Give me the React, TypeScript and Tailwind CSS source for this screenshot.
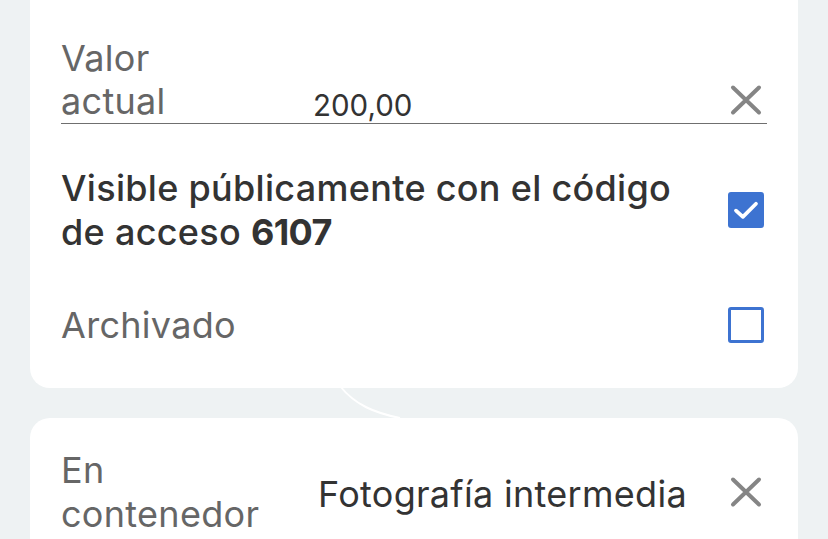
import React, { useState } from 'react';

const CloseIcon = () => (
    <svg viewBox="0 0 32 32" className="w-[32px] h-[32px]" fill="none" stroke="#858585" strokeWidth="4" strokeLinecap="round">
        <path d="M3 3.5 L29 28.5 M29 3.5 L3 28.5" />
    </svg>
);

const Checkbox: React.FC<{ checked: boolean; onChange: () => void }> = ({ checked, onChange }) => (
    <button
        onClick={onChange}
        className={`w-[36px] h-[36px] rounded-[3px] flex items-center justify-center shrink-0 ${checked ? 'bg-[#3d73d1]' : 'border-[3px] border-[#3d73d1] bg-white'}`}
    >
        {checked && (
            <svg viewBox="0 0 24 24" className="w-[30px] h-[30px]" fill="none" stroke="white" strokeWidth="3" strokeLinecap="round" strokeLinejoin="round">
                <path d="M4 12.5 L9.5 17.5 L20 7" />
            </svg>
        )}
    </button>
);

export default function App() {
    const [visible, setVisible] = useState(true);
    const [archived, setArchived] = useState(false);

    return (
        <div className="w-[828px] h-[539px] overflow-hidden bg-[#eef2f3] relative" style={{ fontFamily: 'Inter, "Noto Sans", sans-serif' }}>
            {/* Top card */}
            <div className="mx-[30px] -mt-[30px] bg-white rounded-[20px] pt-[67px] pb-[41px] px-[31px] tracking-[0.3px]">
                {/* Valor actual */}
                <div className="flex items-end border-b-[1.5px] border-[#6f6f6f]">
                    <div className="w-[252px] text-[36px] leading-[43px] text-[#666]">
                        <div>Valor</div>
                        <div>actual</div>
                    </div>
                    <div className="flex-1 text-[29.5px] leading-[36px] text-[#333] tracking-normal">200,00</div>
                    <div className="pb-[7px] pr-[5px]">
                        <CloseIcon />
                    </div>
                </div>

                {/* Visible */}
                <div className="flex items-center mt-[42px]">
                    <div className="flex-1 text-[36px] leading-[44px] text-[#333] font-medium">
                        Visible públicamente con el código
                        <br />
                        de acceso <span className="font-bold tracking-[-0.6px]">6107</span>
                    </div>
                    <div className="pr-[3px]">
                        <Checkbox checked={visible} onChange={() => setVisible(!visible)} />
                    </div>
                </div>

                {/* Archivado */}
                <div className="flex items-center mt-[49px]">
                    <div className="flex-1 text-[36px] leading-[44px] text-[#666]">Archivado</div>
                    <div className="pr-[3px]">
                        <Checkbox checked={archived} onChange={() => setArchived(!archived)} />
                    </div>
                </div>
            </div>

            {/* connector curve */}
            <svg className="absolute left-[330px] top-[380px] w-[90px] h-[45px]" viewBox="0 0 90 45" fill="none">
                <path d="M10 6 C 25 25, 45 33, 70 38" stroke="white" strokeWidth="2" />
            </svg>

            {/* Second card */}
            <div className="mx-[30px] mt-[30px] bg-white rounded-[20px] pt-[30px] pb-[40px] px-[31px] tracking-[0.3px]">
                <div className="flex items-center">
                    <div className="w-[257px] text-[36px] leading-[44px] text-[#666]">
                        <div>En</div>
                        <div>contenedor</div>
                    </div>
                    <div className="flex-1 text-[36px] leading-[44px] text-[#333] pt-[4px]">Fotografía intermedia</div>
                    <div className="pr-[5px]">
                        <CloseIcon />
                    </div>
                </div>
            </div>
        </div>
    );
}
